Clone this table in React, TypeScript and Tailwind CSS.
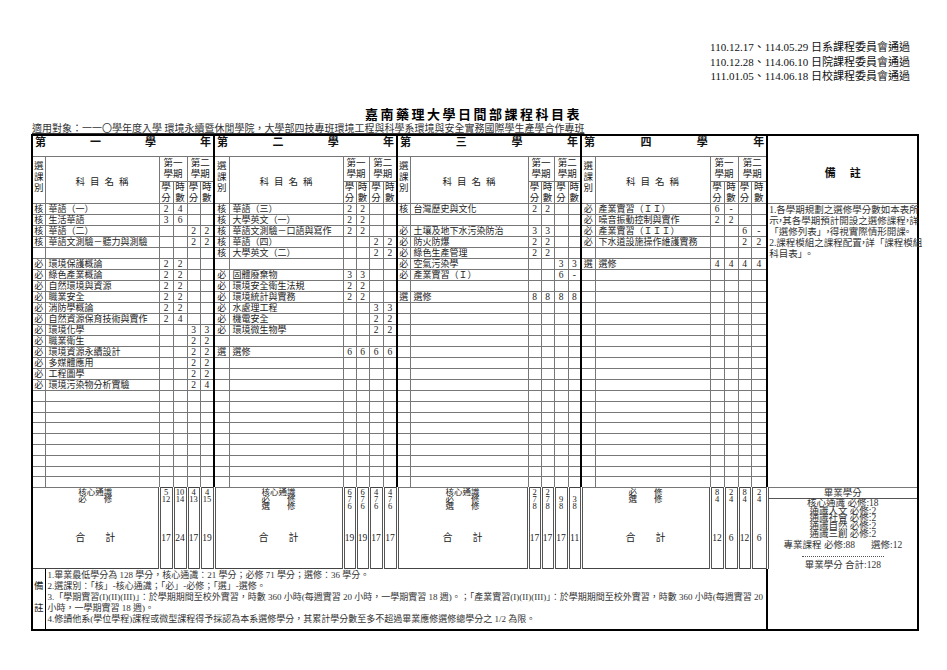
import React from 'react';

type R = [string, string, string, string, string, string] | null;

const pad = (a: R[]): R[] => {
  const out = [...a];
  while (out.length < 26) out.push(null);
  return out;
};

const y1: R[] = pad([
  ['核', '華語（一）', '2', '4', '', ''],
  ['核', '生活華語', '3', '6', '', ''],
  ['核', '華語（二）', '', '', '2', '2'],
  ['核', '華語文測驗－聽力與測驗', '', '', '2', '2'],
  null,
  ['必', '環境保護概論', '2', '2', '', ''],
  ['必', '綠色產業概論', '2', '2', '', ''],
  ['必', '自然環境與資源', '2', '2', '', ''],
  ['必', '職業安全', '2', '2', '', ''],
  ['必', '消防學概論', '2', '2', '', ''],
  ['必', '自然資源保育技術與實作', '2', '4', '', ''],
  ['必', '環境化學', '', '', '3', '3'],
  ['必', '職業衛生', '', '', '2', '2'],
  ['必', '環境資源永續設計', '', '', '2', '2'],
  ['必', '多媒體應用', '', '', '2', '2'],
  ['必', '工程圖學', '', '', '2', '2'],
  ['必', '環境污染物分析實驗', '', '', '2', '4'],
]);

const y2: R[] = pad([
  ['核', '華語（三）', '2', '2', '', ''],
  ['核', '大學英文（一）', '2', '2', '', ''],
  ['核', '華語文測驗－口語與寫作', '2', '2', '', ''],
  ['核', '華語（四）', '', '', '2', '2'],
  ['核', '大學英文（二）', '', '', '2', '2'],
  null,
  ['必', '固體廢棄物', '3', '3', '', ''],
  ['必', '環境安全衛生法規', '2', '2', '', ''],
  ['必', '環境統計與實務', '2', '2', '', ''],
  ['必', '水處理工程', '', '', '3', '3'],
  ['必', '機電安全', '', '', '2', '2'],
  ['必', '環境微生物學', '', '', '2', '2'],
  null,
  ['選', '選修', '6', '6', '6', '6'],
]);

const y3: R[] = pad([
  ['核', '台灣歷史與文化', '2', '2', '', ''],
  null,
  ['必', '土壤及地下水污染防治', '3', '3', '', ''],
  ['必', '防火防爆', '2', '2', '', ''],
  ['必', '綠色生產管理', '2', '2', '', ''],
  ['必', '空氣污染學', '', '', '3', '3'],
  ['必', '產業實習（Ｉ）', '', '', '6', '-'],
  null,
  ['選', '選修', '8', '8', '8', '8'],
]);

const y4: R[] = pad([
  ['必', '產業實習（ＩＩ）', '6', '-', '', ''],
  ['必', '噪音振動控制與實作', '2', '2', '', ''],
  ['必', '產業實習（ＩＩＩ）', '', '', '6', '-'],
  ['必', '下水道設施操作維護實務', '', '', '2', '2'],
  null,
  ['選', '選修', '4', '4', '4', '4'],
]);

const years = [
  { label: '一', rows: y1, tl: ['核心通識', '必修'], tv: [['5', '12'], ['10', '14'], ['4', '13'], ['4', '15']], tot: ['17', '24', '17', '19'] },
  { label: '二', rows: y2, tl: ['核心通識', '必修', '選修'], tv: [['6', '7', '6'], ['6', '7', '6'], ['4', '7', '6'], ['4', '7', '6']], tot: ['19', '19', '17', '17'] },
  { label: '三', rows: y3, tl: ['核心通識', '必修', '選修'], tv: [['2', '7', '8'], ['2', '7', '8'], ['', '9', '8'], ['', '3', '8']], tot: ['17', '17', '17', '11'] },
  { label: '四', rows: y4, tl: ['必修', '選修'], tv: [['8', '4'], ['2', '4'], ['8', '4'], ['2', '4']], tot: ['12', '6', '12', '6'] },
];

const colW = [
  ['w-[13px]', 'w-[114px]', 'w-[14px]', 'w-[14px]', 'w-[13px]', 'w-[14px]'],
  ['w-[15px]', 'w-[114px]', 'w-[13px]', 'w-[13px]', 'w-[14px]', 'w-[14px]'],
  ['w-[13px]', 'w-[118px]', 'w-[13px]', 'w-[13px]', 'w-[14px]', 'w-[13px]'],
  ['w-[14px]', 'w-[115px]', 'w-[14px]', 'w-[14px]', 'w-[13px]', 'w-[16px]'],
];

const C = ({ children }: { children: React.ReactNode }) => (
  <span className="inline-flex w-[3.5px] justify-center">{children}</span>
);

const cell = 'border border-[#777]';
const first = 'border-l-2 border-l-black';

export default function App() {
  return (
    <div className="w-[947px] h-[670px] bg-white text-[#222] font-['Liberation_Serif','Noto_Sans_CJK_TC',serif] overflow-hidden">
      <div className="flex flex-col items-end pr-[37px] pt-[40px] text-[11px] leading-[14.5px] text-[#111]">
        <div>110.12.17、114.05.29 日系課程委員會通過</div>
        <div>110.12.28、114.06.10 日院課程委員會通過</div>
        <div>111.01.05、114.06.18 日校課程委員會通過</div>
      </div>
      <div className="mt-[23px] text-center text-[13px] font-bold tracking-[2.5px] leading-[16px] text-black">
        嘉南藥理大學日間部課程科目表
      </div>
      <div className="ml-[32px] text-[10px] leading-[11px] underline underline-offset-[1px] text-[#333] whitespace-nowrap">
        適用對象：一一〇學年度入學 環境永續暨休閒學院，大學部四技專班環境工程與科學系環境與安全實務國際學生產學合作專班
      </div>
      <table className="table-fixed border-collapse w-[886px] ml-[31px] border-2 border-black">
        <colgroup>
          {colW.flat().map((w, i) => (
            <col key={i} className={w} />
          ))}
          <col className="w-[151px]" />
        </colgroup>
        <tbody>
          <tr className="h-[22px]">
            {years.map((y, i) => (
              <td key={i} colSpan={6} className={`${cell} ${first} align-top px-[2px]`}>
                <div className="flex justify-between text-[11px] leading-[13px] font-bold text-[#111]">
                  <span>第</span>
                  <span>{y.label}</span>
                  <span>學</span>
                  <span>年</span>
                </div>
              </td>
            ))}
            <td rowSpan={3} className={`${cell} ${first} align-middle`}>
              <div className="flex justify-center gap-[14px] pt-[8px] text-[11px] font-bold text-[#111]">
                <span>備</span>
                <span>註</span>
              </div>
            </td>
          </tr>
          <tr className="h-[25px]">
            {years.map((_, i) => (
              <React.Fragment key={i}>
                <td rowSpan={2} className={`${cell} ${first} text-center align-middle`}>
                  <div className="text-[9.5px] leading-[11px] pb-[6px]">
                    選<br />課<br />別
                  </div>
                </td>
                <td rowSpan={2} className={`${cell} text-center align-middle`}>
                  <span className="text-[9.5px] tracking-[5px] pl-[5px]">科目名稱</span>
                </td>
                <td colSpan={2} className={`${cell} text-center align-middle`}>
                  <div className="text-[9.5px] leading-[11px]">第一<br />學期</div>
                </td>
                <td colSpan={2} className={`${cell} text-center align-middle`}>
                  <div className="text-[9.5px] leading-[11px]">第二<br />學期</div>
                </td>
              </React.Fragment>
            ))}
          </tr>
          <tr className="h-[22px]">
            {years.map((_, i) => (
              <React.Fragment key={i}>
                {['學分', '時數', '學分', '時數'].map((t, j) => (
                  <td key={j} className={`${cell} text-center align-middle`}>
                    <div className="text-[9.5px] leading-[10.5px]">
                      {t[0]}
                      <br />
                      {t[1]}
                    </div>
                  </td>
                ))}
              </React.Fragment>
            ))}
          </tr>
          {Array.from({ length: 26 }).map((_, r) => (
            <tr key={r} className="h-[10.8px]">
              {years.map((y, i) => {
                const row = y.rows[r];
                return (
                  <React.Fragment key={i}>
                    <td className={`${cell} ${first} text-center text-[9px] leading-[10px] whitespace-nowrap`}>
                      {row ? row[0] : ''}
                    </td>
                    <td className={`${cell} pl-[3px] text-[9px] leading-[10px] whitespace-nowrap overflow-hidden`}>
                      {row ? row[1] : ''}
                    </td>
                    {[2, 3, 4, 5].map((k) => (
                      <td key={k} className={`${cell} text-center text-[9.5px] leading-[10px]`}>
                        {row ? row[k] : ''}
                      </td>
                    ))}
                  </React.Fragment>
                );
              })}
              {r === 0 && (
                <td rowSpan={26} className={`${cell} ${first} align-top`}>
                  <div className="text-[9.5px] leading-[11px] pl-[1px] pt-[1px] whitespace-nowrap text-[#333]">
                    <div>1.各學期規劃之選修學分數如本表所</div>
                    <div>
                      示<C>，</C>其各學期預計開設之選修課程<C>，</C>詳
                    </div>
                    <div>
                      「選修列表」<C>，</C>得視實際情形開課<C>。</C>
                    </div>
                    <div>
                      2.課程模組之課程配置<C>，</C>詳「課程模組
                    </div>
                    <div>
                      科目表」<C>。</C>
                    </div>
                  </div>
                </td>
              )}
            </tr>
          ))}
          <tr className="h-[81px]">
            {years.map((y, i) => (
              <React.Fragment key={i}>
                <td colSpan={2} className={`border border-[#444] ${first} align-top`}>
                  <div className="h-[80px] flex flex-col items-center">
                    <div className="pt-[1px] flex flex-col text-[8.5px] leading-[6.8px]">
                      {y.tl.map((t, j) =>
                        t.length === 4 ? (
                          <div key={j} className="h-[6.8px]">{t}</div>
                        ) : (
                          <div key={j} className="h-[6.8px] w-[34px] flex justify-between">
                            <span>{t[0]}</span>
                            <span>{t[1]}</span>
                          </div>
                        )
                      )}
                    </div>
                    <div className="mt-auto mb-[24px] flex gap-[20px] text-[10px] leading-[12px]">
                      <span>合</span>
                      <span>計</span>
                    </div>
                  </div>
                </td>
                {y.tv.map((vals, j) => (
                  <td key={j} className="border-x-[3px] border-double border-x-[#555] border-y border-y-[#444] align-top">
                    <div className="h-[80px] flex flex-col items-center">
                      <div className="pt-[1px] flex flex-col items-center text-[8.5px] leading-[6.8px]">
                        {vals.map((v, k) => (
                          <div key={k} className="h-[6.8px]">{v || '\u00a0'}</div>
                        ))}
                      </div>
                      <div className="mt-auto mb-[24px] text-[9.5px] leading-[12px]">{y.tot[j]}</div>
                    </div>
                  </td>
                ))}
              </React.Fragment>
            ))}
            <td rowSpan={2} className={`border border-[#444] ${first} align-top`}>
              <div className="text-[9.5px] text-center text-[#333]">
                <div className="h-[11px] leading-[11px] border-b border-[#555]">畢業學分</div>
                <div className="pt-[1px] leading-[7.6px]">
                  <div>核心通識 必修:18</div>
                  <div>通識人文 必修:2</div>
                  <div>通識社會 必修:2</div>
                  <div>通識自然 必修:2</div>
                  <div>通識三創 必修:2</div>
                </div>
                <div className="mt-[3px] leading-[9px] flex justify-center gap-[16px]">
                  <span>專業課程 必修:88</span>
                  <span>選修:12</span>
                </div>
                <div className="mx-auto mt-[6px] w-[82px] border-b border-dotted border-[#555]"></div>
                <div className="mt-[3px] leading-[11px]">畢業學分 合計:128</div>
              </div>
            </td>
          </tr>
          <tr className="h-[61px]">
            <td className={`border border-black ${first} align-top`}>
              <div className="text-[9.5px] leading-[11px] pt-[1px] text-center">
                <div>&nbsp;</div>
                <div>備</div>
                <div>&nbsp;</div>
                <div>註</div>
              </div>
            </td>
            <td colSpan={23} className="border border-black align-top">
              <div className="text-[9px] leading-[11px] pt-[1px] pl-[2px] whitespace-nowrap overflow-hidden text-[#333]">
                <div>1.畢業最低學分為 128 學分，核心通識：21 學分；必修 71 學分；選修：36 學分。</div>
                <div>2.選課別：「核」-核心通識；「必」-必修；「選」-選修。</div>
                <div>
                  3.「學期實習(I)(II)(III)」：於學期期間至校外實習，時數 360 小時(每週實習 20 小時，一學期實習 18 週)。；「產業實習(I)(II)(III)」：於學期期間至校外實習，時數 360 小時(每週實習 20
                </div>
                <div>小時，一學期實習 18 週)。</div>
                <div>4.修讀他系(學位學程)課程或微型課程得予採認為本系選修學分，其累計學分數至多不超過畢業應修選修總學分之 1/2 為限。</div>
              </div>
            </td>
          </tr>
        </tbody>
      </table>
    </div>
  );
}
